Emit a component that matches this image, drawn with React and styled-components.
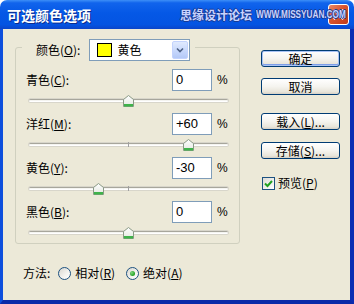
import React from "react";
import styled, { createGlobalStyle } from "styled-components";

const GlobalStyle = createGlobalStyle`
  html, body {
    margin: 0;
    padding: 0;
    background: #fff;
  }
  body {
    font-family: "Noto Sans CJK SC", "Liberation Sans", sans-serif;
    font-size: 12px;
    color: #000;
  }
`;

const Window = styled.div`
  width: 354px;
  height: 304px;
  display: flex;
  flex-direction: column;
  border-radius: 7px 7px 0 0;
  overflow: hidden;
`;

const TitleBar = styled.div`
  position: relative;
  flex: none;
  height: 29px;
  display: flex;
  align-items: center;
  padding: 0 5px 0 7px;
  background: linear-gradient(
    180deg,
    #3d8ff7 0%,
    #1164ec 10%,
    #0558e6 45%,
    #0454e2 85%,
    #0b45c9 100%
  );
`;

const Title = styled.div`
  color: #fff;
  font-weight: bold;
  font-size: 14px;
  line-height: 16px;
  text-shadow: 1px 1px 0 #0c2c8c;
`;

const Watermark = styled.div`
  position: absolute;
  left: 180px;
  top: 7px;
  display: flex;
  align-items: center;
  gap: 4px;
  white-space: nowrap;
  color: #c8d4ff;
  font-weight: bold;
  line-height: 16px;
  text-shadow: 1px 0 0 #1a3a94, -1px 0 0 #1a3a94, 0 1px 0 #1a3a94,
    0 -1px 0 #1a3a94;
  pointer-events: none;
  z-index: 2;
`;

const WatermarkCn = styled.span`
  font-size: 12px;
`;

const WatermarkUrl = styled.span`
  display: inline-block;
  width: 89px;
  font-family: "Liberation Sans", sans-serif;
  font-size: 10px;
  transform: scaleX(0.82);
  transform-origin: left center;
`;

const CloseButton = styled.div`
  margin-left: auto;
  width: 21px;
  height: 21px;
  box-sizing: border-box;
  border: 1px solid #fff;
  border-radius: 3px;
  background: linear-gradient(135deg, #ea8a68 0%, #d9542f 45%, #c13a17 100%);
  display: flex;
  align-items: center;
  justify-content: center;
`;

const Body = styled.div`
  flex: 1;
  display: flex;
  background: #ece9d8;
  border-left: 3px solid #0d4fdd;
  border-right: 4px solid #0a2db3;
  border-bottom: 4px solid #0a2aa8;
`;

const LeftCol = styled.div`
  display: flex;
  flex-direction: column;
  padding: 18px 0 0 12px;
`;

const GroupBox = styled.div`
  width: 225px;
  box-sizing: border-box;
  border: 1px solid #d0d0bf;
  border-radius: 3px;
  display: flex;
  flex-direction: column;
`;

const GroupHeader = styled.div`
  align-self: flex-start;
  display: flex;
  align-items: center;
  gap: 9px;
  margin: -9px 0 0 6px;
  padding: 0 5px 0 14px;
  background: #ece9d8;
`;

const Label = styled.span`
  line-height: 16px;
  white-space: nowrap;
`;

const Dropdown = styled.div`
  width: 101px;
  height: 22px;
  box-sizing: border-box;
  border: 1px solid #7f9db9;
  background: #fff;
  display: flex;
  align-items: center;
  padding: 0 0 0 7px;
`;

const Swatch = styled.span`
  width: 15px;
  height: 14px;
  box-sizing: border-box;
  border: 1px solid #000;
  background: ${(p) => p.$color};
`;

const DropdownText = styled.span`
  margin-left: 5px;
  line-height: 16px;
`;

const ArrowButton = styled.span`
  margin: 0 1px 0 auto;
  width: 16px;
  height: 18px;
  box-sizing: border-box;
  border: 1px solid #c3d3fd;
  border-radius: 2px;
  background: linear-gradient(180deg, #e0eafe 0%, #c5d6fb 60%, #b4c9f7 100%);
  display: flex;
  align-items: center;
  justify-content: center;
`;

const Row = styled.div`
  display: flex;
  align-items: center;
  height: 22px;
  margin-top: ${(p) => (p.$first ? "8px" : "0")};
  padding: 0 11px 0 10px;
`;

const RowLabel = styled(Label)`
  flex: 1;
`;

const NumberInput = styled.div`
  width: 40px;
  height: 22px;
  box-sizing: border-box;
  border: 1px solid #7f9db9;
  background: #fff;
  padding: 0 3px;
  font-family: "Liberation Sans", sans-serif;
  font-size: 13px;
  line-height: 20px;
`;

const Percent = styled.span`
  width: 11px;
  margin-left: 5px;
  font-family: "Liberation Sans", sans-serif;
  font-size: 12px;
  line-height: 16px;
`;

const Slider = styled.div`
  position: relative;
  height: ${(p) => (p.$last ? "20px" : "22px")};
  margin: 0 11px 0 13px;
`;

const Track = styled.div`
  position: relative;
  margin-top: 8px;
  height: 3px;
  box-sizing: border-box;
  border-radius: 2px;
  background: #f4f4f0;
  border-top: 1px solid #a7a69c;
  border-bottom: 1px solid #fff;
  box-shadow: 0 0 0 1px #d8d6cb;

  &::after {
    content: "";
    position: absolute;
    left: 99px;
    top: -2px;
    width: 1px;
    height: 5px;
    background: #a0a0a0;
  }
`;

const Thumb = styled.svg`
  position: absolute;
  top: 4px;
  width: 11px;
  height: 12px;
  z-index: 1;
`;

const MethodRow = styled.div`
  display: flex;
  align-items: center;
  height: 16px;
  margin-top: 21px;
  padding-left: 8px;
`;

const MethodLabel = styled(Label)`
  margin-right: 8px;
`;

const RadioOption = styled.span`
  display: flex;
  align-items: center;
  gap: 4px;
  margin-right: 11px;
`;

const RadioCircle = styled.span`
  width: 13px;
  height: 13px;
  box-sizing: border-box;
  border-radius: 50%;
  border: 1px solid #1c5180;
  background: linear-gradient(135deg, #d8d7d0 0%, #f4f4f0 60%, #fff 100%);
  display: flex;
  align-items: center;
  justify-content: center;

  &::after {
    content: "";
    display: ${(p) => (p.$checked ? "block" : "none")};
    width: 5px;
    height: 5px;
    border-radius: 50%;
    background: radial-gradient(circle at 35% 35%, #7fd67f, #21a121 70%);
  }
`;

const RightCol = styled.div`
  display: flex;
  flex-direction: column;
  width: 79px;
  margin-left: 21px;
  padding-top: 21px;
`;

const Button = styled.div`
  height: 17px;
  margin-top: ${(p) => p.$gap || 0}px;
  box-sizing: border-box;
  border: 1px solid #003c74;
  border-radius: 3px;
  background: linear-gradient(
    180deg,
    #ffffff 0%,
    #f5f4ef 50%,
    #e8e5da 85%,
    #d6d0c5 100%
  );
  box-shadow: ${(p) =>
    p.$default ? "inset 0 0 0 1px #a9c3f4, inset 0 -1px 0 1px #7d9ee8" : "none"};
  display: flex;
  align-items: center;
  justify-content: center;
  line-height: 15px;
  white-space: nowrap;
`;

const CheckRow = styled.div`
  display: flex;
  align-items: center;
  gap: 3px;
  margin-top: 16px;
  padding-left: 1px;
`;

const CheckBox = styled.span`
  width: 13px;
  height: 13px;
  box-sizing: border-box;
  border: 1px solid #1c5180;
  background: linear-gradient(135deg, #dcdbd5 0%, #fff 100%);
  display: flex;
  align-items: center;
  justify-content: center;
`;

const Key = ({ children }) => <u>{children}</u>;

function SliderThumb({ value }) {
  const center = ((value + 100) / 200) * 199;
  return (
    <Thumb viewBox="0 0 11 12" style={{ left: `${center - 5.5}px` }}>
      <defs>
        <linearGradient id={`tg${value}`} x1="0" y1="0" x2="0" y2="1">
          <stop offset="0" stopColor="#ffffff" />
          <stop offset="1" stopColor="#e4e8e0" />
        </linearGradient>
      </defs>
      <path
        d="M0.5 4.5 L5.5 0.5 L10.5 4.5 V11.5 H0.5 Z"
        fill={`url(#tg${value})`}
        stroke="#8a9a86"
        strokeWidth="1"
      />
      <rect x="1" y="9" width="9" height="2.5" fill="#3fb34a" />
    </Thumb>
  );
}

const channels = [
  { name: "青色", key: "C", value: 0, text: "0" },
  { name: "洋红", key: "M", value: 60, text: "+60" },
  { name: "黄色", key: "Y", value: -30, text: "-30" },
  { name: "黑色", key: "B", value: 0, text: "0" },
];

export default function App() {
  return (
    <>
      <GlobalStyle />
      <Window>
        <TitleBar>
          <Title>可选颜色选项</Title>
          <Watermark>
            <WatermarkCn>思缘设计论坛</WatermarkCn>
            <WatermarkUrl>WWW.MISSYUAN.COM</WatermarkUrl>
          </Watermark>
          <CloseButton>
            <svg width="11" height="11" viewBox="0 0 11 11">
              <path
                d="M1.5 1.5 L9.5 9.5 M9.5 1.5 L1.5 9.5"
                stroke="#fff"
                strokeWidth="2"
                strokeLinecap="square"
              />
            </svg>
          </CloseButton>
        </TitleBar>

        <Body>
          <LeftCol>
            <GroupBox>
              <GroupHeader>
                <Label>
                  颜色(<Key>O</Key>):
                </Label>
                <Dropdown>
                  <Swatch $color="#ffff00" />
                  <DropdownText>黄色</DropdownText>
                  <ArrowButton>
                    <svg width="8" height="6" viewBox="0 0 8 6">
                      <path
                        d="M1 1.5 L4 4.5 L7 1.5"
                        fill="none"
                        stroke="#4d6185"
                        strokeWidth="1.6"
                      />
                    </svg>
                  </ArrowButton>
                </Dropdown>
              </GroupHeader>

              {channels.map((c, i) => (
                <React.Fragment key={c.key}>
                  <Row $first={i === 0}>
                    <RowLabel>
                      {c.name}(<Key>{c.key}</Key>):
                    </RowLabel>
                    <NumberInput>{c.text}</NumberInput>
                    <Percent>%</Percent>
                  </Row>
                  <Slider $last={i === channels.length - 1}>
                    <Track />
                    <SliderThumb value={c.value} />
                  </Slider>
                </React.Fragment>
              ))}
            </GroupBox>

            <MethodRow>
              <MethodLabel>方法:</MethodLabel>
              <RadioOption>
                <RadioCircle />
                <Label>
                  相对(<Key>R</Key>)
                </Label>
              </RadioOption>
              <RadioOption>
                <RadioCircle $checked />
                <Label>
                  绝对(<Key>A</Key>)
                </Label>
              </RadioOption>
            </MethodRow>
          </LeftCol>

          <RightCol>
            <Button $default>确定</Button>
            <Button $gap={11}>取消</Button>
            <Button $gap={18}>
              载入(<Key>L</Key>)...
            </Button>
            <Button $gap={12}>
              存储(<Key>S</Key>)...
            </Button>
            <CheckRow>
              <CheckBox>
                <svg width="9" height="9" viewBox="0 0 9 9">
                  <path
                    d="M1 4.5 L3.5 7 L8 2"
                    fill="none"
                    stroke="#21a121"
                    strokeWidth="2"
                  />
                </svg>
              </CheckBox>
              <Label>
                预览(<Key>P</Key>)
              </Label>
            </CheckRow>
          </RightCol>
        </Body>
      </Window>
    </>
  );
}
